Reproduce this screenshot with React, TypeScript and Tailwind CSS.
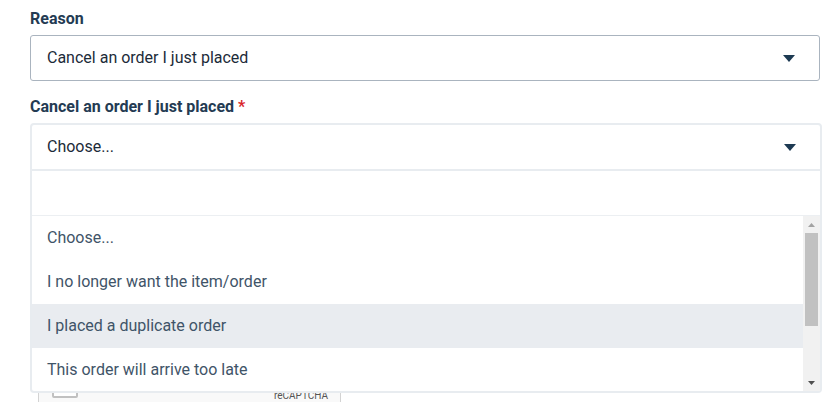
const options = [
  'Choose...',
  'I no longer want the item/order',
  'I placed a duplicate order',
  'This order will arrive too late',
];

function Caret() {
  return (
    <svg width="12" height="7" viewBox="0 0 12 7" className="shrink-0">
      <path d="M0 0h12L6 7z" fill="#1d3a52" />
    </svg>
  );
}

export default function App() {
  return (
    <div className="h-screen overflow-hidden bg-white pl-[30px] pt-[10px] font-['Roboto',sans-serif]">
      {/* first field */}
      <label className="block text-[16px] font-bold leading-[18px] text-[#243b53]">Reason</label>
      <div className="mt-[7px] flex h-[46px] w-[790px] items-center justify-between rounded-[3px] border border-[#aab4bf] pl-[16px] pr-[24px]">
        <span className="text-[16px] text-[#1c2b39]">Cancel an order I just placed</span>
        <Caret />
      </div>

      {/* second field */}
      <label className="mt-[17px] block text-[16px] font-bold leading-[18px] text-[#243b53]">
        Cancel an order I just placed <span className="text-[#d9262b]">*</span>
      </label>
      <div className="relative mt-[7px] w-[792px]">
        <div className="rounded-t-[4px] border-x-2 border-t-2 border-b-2 border-[#e8ecf0]">
          <div className="flex h-[44px] items-center justify-between pl-[15px] pr-[24px]">
            <span className="text-[16px] text-[#1c2b39]">Choose...</span>
            <Caret />
          </div>
        </div>

        {/* open dropdown */}
        <div className="absolute left-0 right-0 top-full z-10 rounded-b-[4px] border-x-2 border-b-2 border-[#e8ecf0] bg-white">
          <div className="h-[45px] border-b border-[#eceff2]" />
          <div className="flex h-[175px]">
            <ul className="flex-1">
              {options.map((o, i) => (
                <li
                  key={o}
                  className={
                    'flex h-[44px] items-center pl-[15px] text-[16px] text-[#3f5468] ' +
                    (i === 2 ? 'bg-[#e9ecf0]' : '')
                  }
                >
                  {o}
                </li>
              ))}
            </ul>
            {/* scrollbar */}
            <div className="flex w-[17px] flex-col items-center bg-[#f1f1f1]">
              <div className="flex h-[17px] w-full items-center justify-center">
                <svg width="7" height="4" viewBox="0 0 7 4">
                  <path d="M0 4h7L3.5 0z" fill="#a3a3a3" />
                </svg>
              </div>
              <div className="h-[93px] w-[13px] bg-[#c1c1c1]" />
              <div className="flex-1" />
              <div className="flex h-[17px] w-full items-center justify-center">
                <svg width="7" height="4" viewBox="0 0 7 4">
                  <path d="M0 0h7L3.5 4z" fill="#505050" />
                </svg>
              </div>
            </div>
          </div>
        </div>
      </div>

      {/* recaptcha, mostly hidden behind the dropdown */}
      <div className="ml-[8px] mt-[176px] flex h-[76px] w-[303px] items-start justify-between rounded-[3px] border border-[#d3d3d3] bg-[#f9f9f9] pl-[13px] pr-[12px] pt-[24px]">
        <div className="h-[26px] w-[26px] rounded-[2px] border-2 border-[#c1c1c1] bg-white" />
        <span className="mt-[18px] text-[10px] leading-[11px] text-[#555]">reCAPTCHA</span>
      </div>
    </div>
  );
}
